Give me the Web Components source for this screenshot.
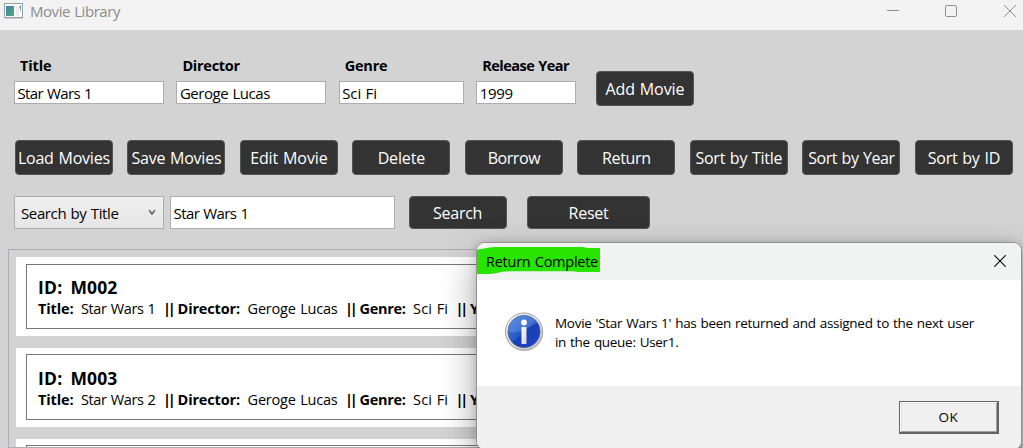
<!DOCTYPE html>
<html lang="en">
<head>
<meta charset="utf-8">
<title>Movie Library</title>
<style>
html,body{margin:0;height:448px;overflow:hidden;background:#d3d3d3}
body{font:15px "Open Sans","Noto Sans",sans-serif;color:#000}
</style>
</head>
<body>
<movie-app></movie-app>

<template id="t-app">
<style>
:host{display:flex;flex-direction:column;width:1023px;height:448px;position:relative;overflow:hidden;background:#d3d3d3}
main{display:flex;flex-direction:column;flex:1;min-height:0}
.form{display:flex;gap:12.4px;padding:25px 0 0 14px;height:51px;align-items:flex-start}
.form dark-button{margin:16px 0 0 7.4px}
.tools{display:flex;gap:14.5px;padding:34px 0 0 14.9px}
.search{display:flex;padding:21px 0 0 14px}
.search movie-input{margin-left:6px}
.search .s{margin-left:13.6px}
.search .r{margin-left:20.4px}
.list{margin:20px 1px 0 8px;border:1px solid #abadb3;padding:7px;flex:1;min-height:0;display:flex;flex-direction:column;gap:12px;overflow:hidden}
.list movie-card+movie-card{--top:6px;--frame:66px}
</style>
<title-bar></title-bar>
<main>
<div class="form">
<movie-field width="150" label="Title" lw="31.5"><fit-text w="74.5">Star Wars 1</fit-text></movie-field>
<movie-field width="150" label="Director" lw="57.5"><fit-text w="90">Geroge Lucas</fit-text></movie-field>
<movie-field width="125" label="Genre" lw="42.5"><fit-text w="34.5">Sci Fi</fit-text></movie-field>
<movie-field width="100" label="Release Year" lw="87"><fit-text w="33">1999</fit-text></movie-field>
<dark-button><fit-text w="79" size="16">Add Movie</fit-text></dark-button>
</div>
<div class="tools">
<dark-button><fit-text w="92" size="16">Load Movies</fit-text></dark-button>
<dark-button><fit-text w="90" size="16">Save Movies</fit-text></dark-button>
<dark-button><fit-text w="77.5" size="16">Edit Movie</fit-text></dark-button>
<dark-button><fit-text w="47.5" size="16">Delete</fit-text></dark-button>
<dark-button><fit-text w="52.5" size="16">Borrow</fit-text></dark-button>
<dark-button><fit-text w="49" size="16">Return</fit-text></dark-button>
<dark-button><fit-text w="87" size="16">Sort by Title</fit-text></dark-button>
<dark-button><fit-text w="86.5" size="16">Sort by Year</fit-text></dark-button>
<dark-button><fit-text w="72.5" size="16">Sort by ID</fit-text></dark-button>
</div>
<div class="search">
<combo-box><fit-text w="97.5">Search by Title</fit-text></combo-box>
<movie-input style="--w:225px;--h:33px;--lh:33px"><fit-text w="75">Star Wars 1</fit-text></movie-input>
<dark-button class="s" style="--h:33px"><fit-text w="49" size="16">Search</fit-text></dark-button>
<dark-button class="r" style="--h:33px;--w:123px"><fit-text w="40" size="16">Reset</fit-text></dark-button>
</div>
<div class="list">
<movie-card><span slot="id">M002</span><fit-text w="74.5" size="14.5" slot="title">Star Wars 1</fit-text></movie-card>
<movie-card style="--pad:12px"><span slot="id">M003</span><fit-text w="74.5" size="14.5" slot="title">Star Wars 2</fit-text></movie-card>
<movie-card></movie-card>
</div>
</main>
<message-dialog></message-dialog>
</template>

<template id="t-bar">
<style>
:host{display:flex;height:30px;background:#f3f3f3;color:#8b8b8b;flex:none}
.icon{margin:3px 0 0 4px}
.name{margin-left:6px;line-height:22px}
.controls{margin-left:auto;display:flex}
svg{display:block;flex:none}
</style>
<svg class="icon" width="20" height="16" viewBox="0 0 20 16">
<defs><linearGradient id="g" x1="0" y1="0" x2="1" y2="1"><stop offset="0" stop-color="#3f82a5"/><stop offset="1" stop-color="#55a974"/></linearGradient><linearGradient id="b" x1="0" y1="0" x2="0" y2="1"><stop offset="0" stop-color="#4580b6"/><stop offset="1" stop-color="#74b49a"/></linearGradient></defs>
<rect x=".5" y=".5" width="18" height="14" fill="#fafafa" stroke="#999fa4"/><path d="M1 15.5h18" stroke="#cfcfcf"/>
<rect x="2" y="3" width="8" height="10" fill="url(#g)"/><path d="M12 3h3v10h-3z" fill="#ececec"/><path d="M15.3 3h1.7v6z" fill="url(#b)"/>
</svg>
<fit-text class="name" w="90" size="15">Movie Library</fit-text>
<svg class="controls" width="137" height="30" viewBox="0 0 137 30" fill="none" stroke="#8e8e8e">
<path d="M1 10.5h12"/><rect x="59.5" y="5.5" width="11" height="11" rx="1.3"/><path d="M118 5l12 12M130 5l-12 12"/>
</svg>
</template>

<template id="t-field">
<style>
:host{display:block}
.label{display:block;padding-left:6px;line-height:22px;height:26px}
movie-input{--h:23px;--lh:22px}
</style>
<fit-text class="label" weight="700" size="14.5"></fit-text>
<movie-input><slot></slot></movie-input>
</template>

<template id="t-input">
<style>
:host{display:block;box-sizing:border-box;width:var(--w,150px);height:var(--h,23px);border:1px solid #abadb3;background:#fff;padding-left:2.5px;line-height:var(--lh)}
</style><slot></slot>
</template>

<template id="t-button">
<style>
:host{display:flex;flex:none;box-sizing:border-box;width:var(--w,98px);height:var(--h,35px);border:1px solid #555;border-radius:4px;background:#333;color:#fff;align-items:center;justify-content:center;line-height:24px}
::slotted(*){position:relative;top:.6px}
</style><slot></slot>
</template>

<template id="t-combo">
<style>
:host{display:flex;box-sizing:border-box;width:150px;height:33px;border:1px solid #acacac;background:linear-gradient(#f0f0f0,#e5e5e5);padding:0 7px 0 6px;justify-content:space-between;line-height:33px}
svg{display:block;margin-top:12px}
</style><slot></slot>
<svg width="8" height="7" viewBox="0 0 8 7" fill="none" stroke="#606060" stroke-width="1.6"><path d="M1.2 1.3L4 5l2.8-3.7"/></svg>
</template>

<template id="t-card">
<style>
:host{display:block;flex:none;box-sizing:border-box;height:79px;background:#fff;padding:var(--top,7px) 10px 0;margin-right:-1px}
.frame{box-sizing:border-box;height:var(--frame,65px);border:1px solid #777;padding:var(--pad,11px) 0 0 11px;white-space:nowrap}
.id{height:23px;line-height:23px;display:flex;font-weight:700;gap:8px}
.info{display:flex;line-height:20px}
.info>*{flex:none}
.bar{margin:0 5px 0 7.5px}
.v{margin-left:7.5px}
slot{display:block}
</style>
<div class="frame">
<div class="id"><fit-text w="24.5" size="17.5" weight="700">ID:</fit-text><fit-text class="num" w="47" size="17.5" weight="700"></fit-text></div>
<div class="info">
<fit-text w="35.5" weight="700" size="14.5">Title:</fit-text><div class="v"><slot name="title"></slot></div>
<fit-text class="bar" w="9.5" weight="700" size="14.5">||</fit-text><fit-text w="62.5" weight="700" size="14.5">Director:</fit-text><fit-text class="v" w="90" size="14.5">Geroge Lucas</fit-text>
<fit-text class="bar" w="9.5" weight="700" size="14.5">||</fit-text><fit-text w="46" weight="700" size="14.5">Genre:</fit-text><fit-text class="v" w="35" size="14.5">Sci Fi</fit-text>
<fit-text class="bar" w="9.5" weight="700" size="14.5">||</fit-text><fit-text w="36" weight="700" size="14.5">Year:</fit-text>
</div>
</div>
</template>

<template id="t-dialog">
<style>
:host{position:absolute;left:476px;top:242px;box-sizing:border-box;width:546px;height:208px;display:flex;flex-direction:column;border:1px solid #929292;border-radius:9px;overflow:hidden;background:#fff;box-shadow:0 15px 36px rgba(0,0,0,.36),0 0 8px rgba(0,0,0,.14)}
header{height:37px;flex:none;background:#f1f3f3;display:flex;justify-content:space-between}
.heading{position:relative;width:123px;height:32px}
.heading svg{position:absolute;left:0;top:0}
.heading fit-text{position:relative;left:9px;line-height:37px}
.close{margin:12px 15px 0 0}
.body{height:106px;flex:none;display:flex}
.info{margin:31px 0 0 26px}
.message{margin:34px 0 0 10px;display:flex;flex-direction:column;line-height:19px}
footer{flex:1;background:#f0f0f0;display:flex;justify-content:flex-end;align-items:flex-start;padding:15px 22px 0 0}
.ok{box-sizing:border-box;width:100px;height:33px;border:1px solid #646464;border-right-width:2px;border-bottom-width:2px;background:#f0f0f0;box-shadow:inset 1px 1px #fff,inset -1px -1px #a0a0a0,inset 2px 2px #e3e3e3;text-align:center;line-height:31px}
svg{display:block}
</style>
<header>
<div class="heading">
<svg width="123" height="32" viewBox="0 0 123 32"><path d="M0 6.5C7 6 11 4.2 18 4h86c5 0 4 1 8 1h11v24h-20c-4 0-5-.8-10-.8H36c-14 0-16 2.8-25 2.8H0z" fill="#27e500"/></svg>
<fit-text w="112" size="14.5">Return Complete</fit-text>
</div>
<svg class="close" width="12" height="12" viewBox="0 0 12 12" stroke="#111" stroke-width="1.2"><path d="M.2.2l11.6 11.6M11.8.2L.2 11.8"/></svg>
</header>
<div class="body">
<svg class="info" width="42" height="42" viewBox="0 0 42 42">
<defs>
<linearGradient id="blue" x1="0" y1="0" x2="1" y2="1"><stop offset="0" stop-color="#5484da"/><stop offset=".48" stop-color="#245ac7"/><stop offset=".52" stop-color="#173eb0"/><stop offset="1" stop-color="#2344d2"/></linearGradient>
<linearGradient id="ring" x1="0" y1="0" x2="1" y2="1"><stop offset="0" stop-color="#fff"/><stop offset="1" stop-color="#c9c9c9"/></linearGradient>
<linearGradient id="letter" x1="0" y1="0" x2="1" y2="1"><stop offset="0" stop-color="#fff"/><stop offset="1" stop-color="#d2d2d2"/></linearGradient>
</defs>
<ellipse cx="21.5" cy="22.3" rx="18.8" ry="18" fill="#aaa" opacity=".45"/>
<circle cx="21" cy="20.5" r="18.5" fill="url(#ring)" stroke="#929292" stroke-width=".9"/>
<circle cx="21" cy="20.5" r="16.2" fill="url(#blue)" stroke="#53627c" stroke-width=".7"/>
<path d="M5.2 21C13 22 26 18 34.5 11.5A16 16 0 0 0 5.2 21z" fill="#79a2e9" opacity=".35"/>
<circle cx="21" cy="11.5" r="2.9" fill="#fff"/><rect x="18.5" y="16" width="5" height="17" rx=".8" fill="url(#letter)"/>
</svg>
<div class="message"><fit-text w="419" size="13.5">Movie 'Star Wars 1' has been returned and assigned to the next user</fit-text><fit-text w="123.5" size="13.5">in the queue: User1.</fit-text></div>
</div>
<footer><div class="ok"><fit-text w="20" size="13.5">OK</fit-text></div></footer>
</template>

<script>
const ctx = document.createElement('canvas').getContext('2d');

class TemplateElement extends HTMLElement {
  constructor() {
    super();
    this.attachShadow({mode: 'open'}).append(
      document.importNode(document.getElementById(this.constructor.template).content, true));
  }
}

/* Spaces its letters and words so the text run occupies the width in "w". */
class FitText extends HTMLElement {
  constructor() {
    super();
    this.attachShadow({mode: 'open'}).innerHTML =
      '<style>:host{display:inline-block;white-space:pre}span{display:inline-block;vertical-align:top}</style><span><slot></slot></span>';
  }
  connectedCallback() { this.fit(); }
  fit() {
    const text = this.textContent;
    if (!text) return;
    const size = this.getAttribute('size') || 15;
    const weight = this.getAttribute('weight') || 400;
    const wordGap = 0.8;
    const gaps = text.split(' ').length - 1;
    ctx.font = `${weight} ${size}px "Open Sans","Noto Sans",sans-serif`;
    const span = this.shadowRoot.querySelector('span');
    span.style.fontSize = size + 'px';
    span.style.fontWeight = weight;
    span.style.wordSpacing = wordGap + 'px';
    span.style.letterSpacing =
      (this.getAttribute('w') - ctx.measureText(text).width - gaps * wordGap) / text.length + 'px';
  }
}
customElements.define('fit-text', FitText);

const define = (name, template, connected) => customElements.define(name, class extends TemplateElement {
  static template = template;
  connectedCallback() { if (connected) connected(this); }
});
define('title-bar', 't-bar');
define('movie-input', 't-input');
define('movie-field', 't-field', el => {
  const label = el.shadowRoot.querySelector('.label');
  label.textContent = el.getAttribute('label');
  label.setAttribute('w', el.getAttribute('lw'));
  label.fit();
  el.style.setProperty('--w', el.getAttribute('width') + 'px');
});
define('dark-button', 't-button');
define('combo-box', 't-combo');
define('movie-card', 't-card', el => {
  const id = el.querySelector('[slot=id]');
  if (!id) { el.shadowRoot.querySelector('.frame').replaceChildren(); return; }
  const num = el.shadowRoot.querySelector('.num');
  num.textContent = id.textContent;
  id.remove();
  num.fit();
});
define('message-dialog', 't-dialog');
define('movie-app', 't-app');
</script>
</body>
</html>
